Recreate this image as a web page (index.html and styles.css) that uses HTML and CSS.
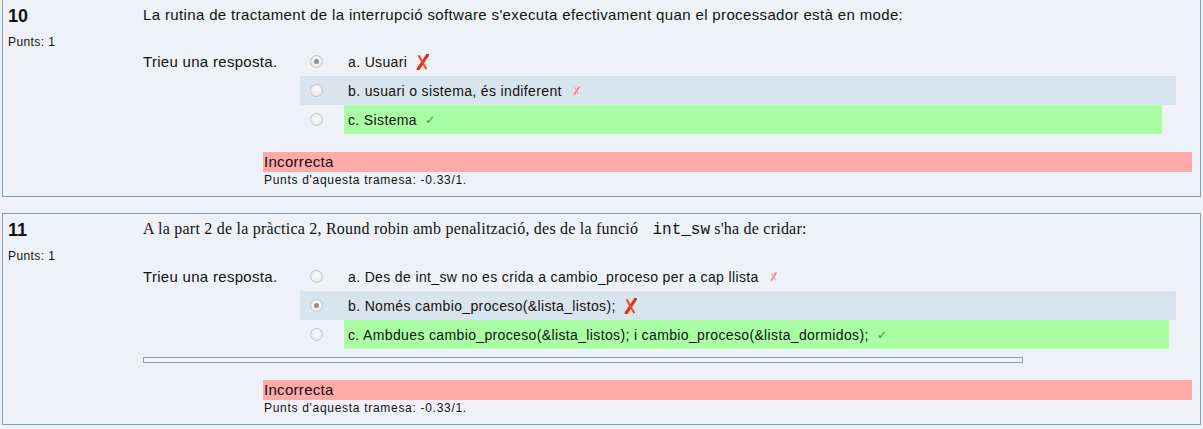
FILE: index.html
```html
<!DOCTYPE html>
<html>
<head>
<meta charset="utf-8">
<link rel="stylesheet" href="styles.css">
</head>
<body>
<div class="page">
  <div class="que first">
    <div class="info">
      <div class="qno">10</div>
      <div class="grade">Punts: 1</div>
    </div>
    <div class="content">
      <div class="qtext">La rutina de tractament de la interrupció software s'executa efectivament quan el processador està en mode:</div>
      <div class="ablock">
        <div class="prompt">Trieu una resposta.</div>
        <div class="answer">
          <div class="row">
            <div class="rcell"><span class="radio checked"></span></div>
            <div class="tcell">a. Usuari <svg class="bigx" width="13" height="16" viewBox="0 0 13 16"><path d="M11.5 1 C9 5 5.5 10 2.2 15" stroke="#e4301a" stroke-width="3.2" fill="none" stroke-linecap="round"/><path d="M3 2 C5 6 7.5 10 10 14.5" stroke="#f04b1f" stroke-width="2" fill="none" stroke-linecap="round"/></svg></div>
          </div>
          <div class="row shade">
            <div class="rcell"><span class="radio"></span></div>
            <div class="tcell">b. usuari o sistema, és indiferent <svg class="smallx" width="7" height="9" viewBox="0 0 7 9"><path d="M6 1 L1.5 8.2" stroke="#f08080" stroke-width="1.6" stroke-linecap="round"/><path d="M1.8 1.8 L5.2 7.5" stroke="#f39a9a" stroke-width="1.1" stroke-linecap="round"/></svg></div>
          </div>
          <div class="row">
            <div class="rcell"><span class="radio"></span></div>
            <div class="tcell correct gap14">c. Sistema <span class="tick">✓</span></div>
          </div>
        </div>
      </div>
      <div class="feedback">Incorrecta</div>
      <div class="points">Punts d'aquesta tramesa: -0.33/1.</div>
    </div>
  </div>

  <div class="que">
    <div class="info">
      <div class="qno">11</div>
      <div class="grade">Punts: 1</div>
    </div>
    <div class="content">
      <div class="qtext serif">A la part 2 de la pràctica 2, Round robin amb penalització, des de la funció <code class="mono">int_sw</code> s'ha de cridar:</div>
      <div class="ablock">
        <div class="prompt">Trieu una resposta.</div>
        <div class="answer">
          <div class="row">
            <div class="rcell"><span class="radio"></span></div>
            <div class="tcell">a. Des de int_sw no es crida a cambio_proceso per a cap llista <svg class="smallx" width="7" height="9" viewBox="0 0 7 9"><path d="M6 1 L1.5 8.2" stroke="#f08080" stroke-width="1.6" stroke-linecap="round"/><path d="M1.8 1.8 L5.2 7.5" stroke="#f39a9a" stroke-width="1.1" stroke-linecap="round"/></svg></div>
          </div>
          <div class="row shade">
            <div class="rcell"><span class="radio checked"></span></div>
            <div class="tcell">b. Només cambio_proceso(&amp;lista_listos); <svg class="bigx" width="13" height="16" viewBox="0 0 13 16"><path d="M11.5 1 C9 5 5.5 10 2.2 15" stroke="#e4301a" stroke-width="3.2" fill="none" stroke-linecap="round"/><path d="M3 2 C5 6 7.5 10 10 14.5" stroke="#f04b1f" stroke-width="2" fill="none" stroke-linecap="round"/></svg></div>
          </div>
          <div class="row">
            <div class="rcell"><span class="radio"></span></div>
            <div class="tcell correct gap7">c. Ambdues cambio_proceso(&amp;lista_listos); i cambio_proceso(&amp;lista_dormidos); <span class="tick">✓</span></div>
          </div>
        </div>
      </div>
      <div class="emptybox"></div>
      <div class="feedback">Incorrecta</div>
      <div class="points">Punts d'aquesta tramesa: -0.33/1.</div>
    </div>
  </div>
</div>
</body>
</html>
```

FILE: styles.css
```css
html, body {
  margin: 0;
  padding: 0;
  background: #eef2f8;
}
body {
  font-family: "Liberation Sans", Arial, sans-serif;
  color: #111;
  width: 1203px;
  height: 429px;
  overflow: hidden;
}
.page {
  padding: 0 2px 0 2px;
}
.que {
  display: flex;
  border: 1px solid #7f9fba;
  background: #eef2f8;
  margin-bottom: 16px;
}
.que.first {
  margin-top: -1px;
}
.info {
  width: 135px;
  padding: 6px 0 0 5px;
  flex: none;
}
.qno {
  font-weight: bold;
  font-size: 18px;
  line-height: 21px;
}
.grade {
  font-size: 12px;
  line-height: 16px;
  margin-top: 7px;
  letter-spacing: 0.4px;
}
.content {
  flex: 1;
  padding: 5px 8px 8px 0;
}
.qtext {
  font-size: 15px;
  letter-spacing: 0.36px;
  line-height: 20px;
  margin-bottom: 22px;
}
.qtext.serif {
  font-family: "Liberation Serif", "Times New Roman", serif;
  font-size: 16px;
  letter-spacing: 0.22px;
}
.mono {
  font-family: "Liberation Mono", "Courier New", monospace;
  font-size: 16px;
  letter-spacing: 0;
  margin: 0 0 0 10px;
}
.ablock {
  display: flex;
  align-items: flex-start;
}
.prompt {
  width: 157px;
  flex: none;
  font-size: 15px;
  letter-spacing: 0.3px;
  line-height: 29px;
}
.answer {
  width: 876px;
  display: flex;
  flex-direction: column;
}
.row {
  display: flex;
  height: 29px;
}
.row.shade {
  background: #d8e4ee;
}
.rcell {
  width: 44px;
  flex: none;
  display: flex;
  align-items: center;
  padding-left: 10px;
  box-sizing: border-box;
}
.radio {
  width: 11px;
  height: 11px;
  border-radius: 50%;
  border: 1px solid #c4c6c8;
  background: radial-gradient(circle at 50% 40%, #fbfbfb, #e2e3e4);
  display: flex;
  align-items: center;
  justify-content: center;
}
.radio.checked::after {
  content: "";
  width: 5px;
  height: 5px;
  border-radius: 50%;
  background: #8e8f90;
}
.tcell {
  flex: 1;
  display: flex;
  align-items: center;
  padding-left: 4px;
  font-size: 14px;
  letter-spacing: 0.36px;
  white-space: pre;
}
.tcell.correct {
  background: #aaffa5;
}
.tcell.gap14 {
  margin-right: 14px;
}
.tcell.gap7 {
  margin-right: 7px;
}
.bigx {
  margin-left: 4px;
}
.smallx {
  margin-left: 7px;
}
.tick {
  color: #2f9b2f;
  font-size: 12px;
  margin-left: 4px;
  font-family: "DejaVu Sans", sans-serif;
}
.feedback {
  margin: 18px 0 0 120px;
  background: #ffa9a9;
  height: 20px;
  line-height: 20px;
  font-size: 15px;
  letter-spacing: 0.3px;
  padding-left: 1px;
}
.points {
  margin-left: 121px;
  font-size: 12px;
  letter-spacing: 0.7px;
  line-height: 16px;
}
.emptybox {
  margin-top: 8px;
  width: 878px;
  height: 4px;
  border: 1px solid #86a3bd;
  margin-bottom: -1px;
}
```
